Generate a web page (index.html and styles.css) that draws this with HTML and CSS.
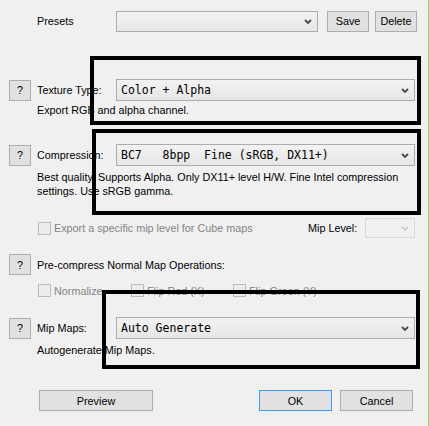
FILE: index.html
```html
<!DOCTYPE html>
<html>
<head>
<meta charset="utf-8">
<title>Texture Export Options</title>
<link rel="stylesheet" href="styles.css">
</head>
<body>
<div class="dialog">

  <div class="row presets">
    <span class="label">Presets</span>
    <div class="combo preset-combo">
      <span class="value"></span>
      <svg class="chev" width="8" height="5" viewBox="0 0 8 5"><path d="M1 1 L4 4 L7 1" /></svg>
    </div>
    <button class="btn save">Save</button>
    <button class="btn delete">Delete</button>
  </div>

  <div class="group texture">
    <div class="row">
      <button class="btn help">?</button>
      <span class="label">Texture Type:</span>
      <div class="combo">
        <span class="value">Color + Alpha</span>
        <svg class="chev" width="8" height="5" viewBox="0 0 8 5"><path d="M1 1 L4 4 L7 1" /></svg>
      </div>
    </div>
    <p class="desc">Export RGB and alpha channel.</p>
  </div>

  <div class="group compression">
    <div class="row">
      <button class="btn help">?</button>
      <span class="label">Compression:</span>
      <div class="combo">
        <span class="value">BC7   8bpp  Fine (sRGB, DX11+)</span>
        <svg class="chev" width="8" height="5" viewBox="0 0 8 5"><path d="M1 1 L4 4 L7 1" /></svg>
      </div>
    </div>
    <p class="desc">Best quality. Supports Alpha. Only DX11+ level H/W. Fine Intel compression settings. Use sRGB gamma.</p>
  </div>

  <div class="row cube">
    <label class="check disabled"><span class="box"></span>Export a specific mip level for Cube maps</label>
    <span class="mip-label">Mip Level:</span>
    <div class="combo mip-combo disabled">
      <span class="value"></span>
      <svg class="chev" width="8" height="5" viewBox="0 0 8 5"><path d="M1 1 L4 4 L7 1" /></svg>
    </div>
  </div>

  <div class="row normals">
    <button class="btn help">?</button>
    <span class="label wide">Pre-compress Normal Map Operations:</span>
  </div>

  <div class="row checks">
    <label class="check disabled normalize"><span class="box"></span>Normalize</label>
    <label class="check disabled flip-red"><span class="box"></span>Flip Red (X)</label>
    <label class="check disabled"><span class="box"></span>Flip Green (Y)</label>
  </div>

  <div class="group mips">
    <div class="row">
      <button class="btn help">?</button>
      <span class="label">Mip Maps:</span>
      <div class="combo">
        <span class="value">Auto Generate</span>
        <svg class="chev" width="8" height="5" viewBox="0 0 8 5"><path d="M1 1 L4 4 L7 1" /></svg>
      </div>
    </div>
    <p class="desc">Autogenerate Mip Maps.</p>
  </div>

  <div class="row actions">
    <button class="btn preview">Preview</button>
    <button class="btn ok default">OK</button>
    <button class="btn cancel">Cancel</button>
  </div>

  <!-- annotation boxes drawn over the dialog -->
  <div class="mark mark-texture"></div>
  <div class="mark mark-compression"></div>
  <div class="mark mark-mips"></div>
</div>
</body>
</html>
```

FILE: styles.css
```css
* {margin:0; padding:0; box-sizing:border-box;}
body {background:#f0f0f0; color:#000; font-family:"Liberation Sans",Arial,sans-serif; font-size:10.8px;}

.dialog {position:relative; width:429px; height:426px; padding:10px 0 0 9px; border-right:1px solid #9fd46b;}

.row {display:flex; align-items:center;}
.label {width:79px; white-space:nowrap;}
.label.wide {width:auto;}

.btn {
font-family:"Liberation Sans",Arial,sans-serif;
font-size:10.8px;
color:#000;
background:#e1e1e1;
border:1px solid #adadad;
height:21px;
}
.btn.help {width:22px; margin-right:6px;}
.btn.default {border-color:#3c9bf5;}

.combo {
display:flex;
align-items:center;
width:299px;
height:22px;
padding:0 5px 0 4px;
border:1px solid #acacac;
background:linear-gradient(#f2f2f2,#e6e6e6);
}
.combo .value {flex:1; white-space:pre; font-family:"DejaVu Sans Mono","Liberation Mono",monospace; font-size:11.5px;}
.chev {fill:none; stroke:#484848; stroke-width:1.8;}
.combo.disabled {border-color:#d9d9d9; background:#f0f0f0;}
.combo.disabled .chev {stroke:#c4c4c4; stroke-width:1.4;}

.desc {padding-left:28px; line-height:14px; width:410px;}

/* presets */
.presets {padding-left:28px; height:22px;}
.preset-combo {width:202px; height:21px;}
.btn.save {width:42px; margin-left:9px;}
.btn.delete {width:42px; margin-left:6px;}

.texture {margin-top:47px;}
.texture .desc {margin-top:2px;}
.compression {margin-top:27px;}
.compression .desc {margin-top:4px;}

/* checkboxes */
.check {display:flex; align-items:center; white-space:nowrap;}
.check .box {width:13px; height:13px; border:1px solid #bcbcbc; background:#ececec; margin-right:3px;}
.check.disabled {color:#838383;}

.cube {margin-top:20px; height:20px; width:406px; padding-left:29px;}
.mip-label {margin-left:auto; width:57px;}
.mip-combo {width:50px; height:20px;}

.normals {margin-top:16px;}
.checks {margin-top:9px; height:13px; padding-left:29px;}
.check.normalize {width:93px;}
.check.flip-red {width:102px;}

.mips {margin-top:20px;}
.mips .desc {margin-top:4px;}

.actions {margin-top:33px; padding-left:30px;}
.btn.preview {width:114px;}
.btn.ok {width:73px; margin-left:106px;}
.btn.cancel {width:73px; margin-left:8px;}

/* annotation rectangles */
.mark {position:absolute; border:4px solid #000;}
.mark-texture {left:90px; top:56px; width:331px; height:69px;}
.mark-compression {left:92px; top:129px; width:329px; height:86px;}
.mark-mips {left:102px; top:290px; width:318px; height:79px;}
```
